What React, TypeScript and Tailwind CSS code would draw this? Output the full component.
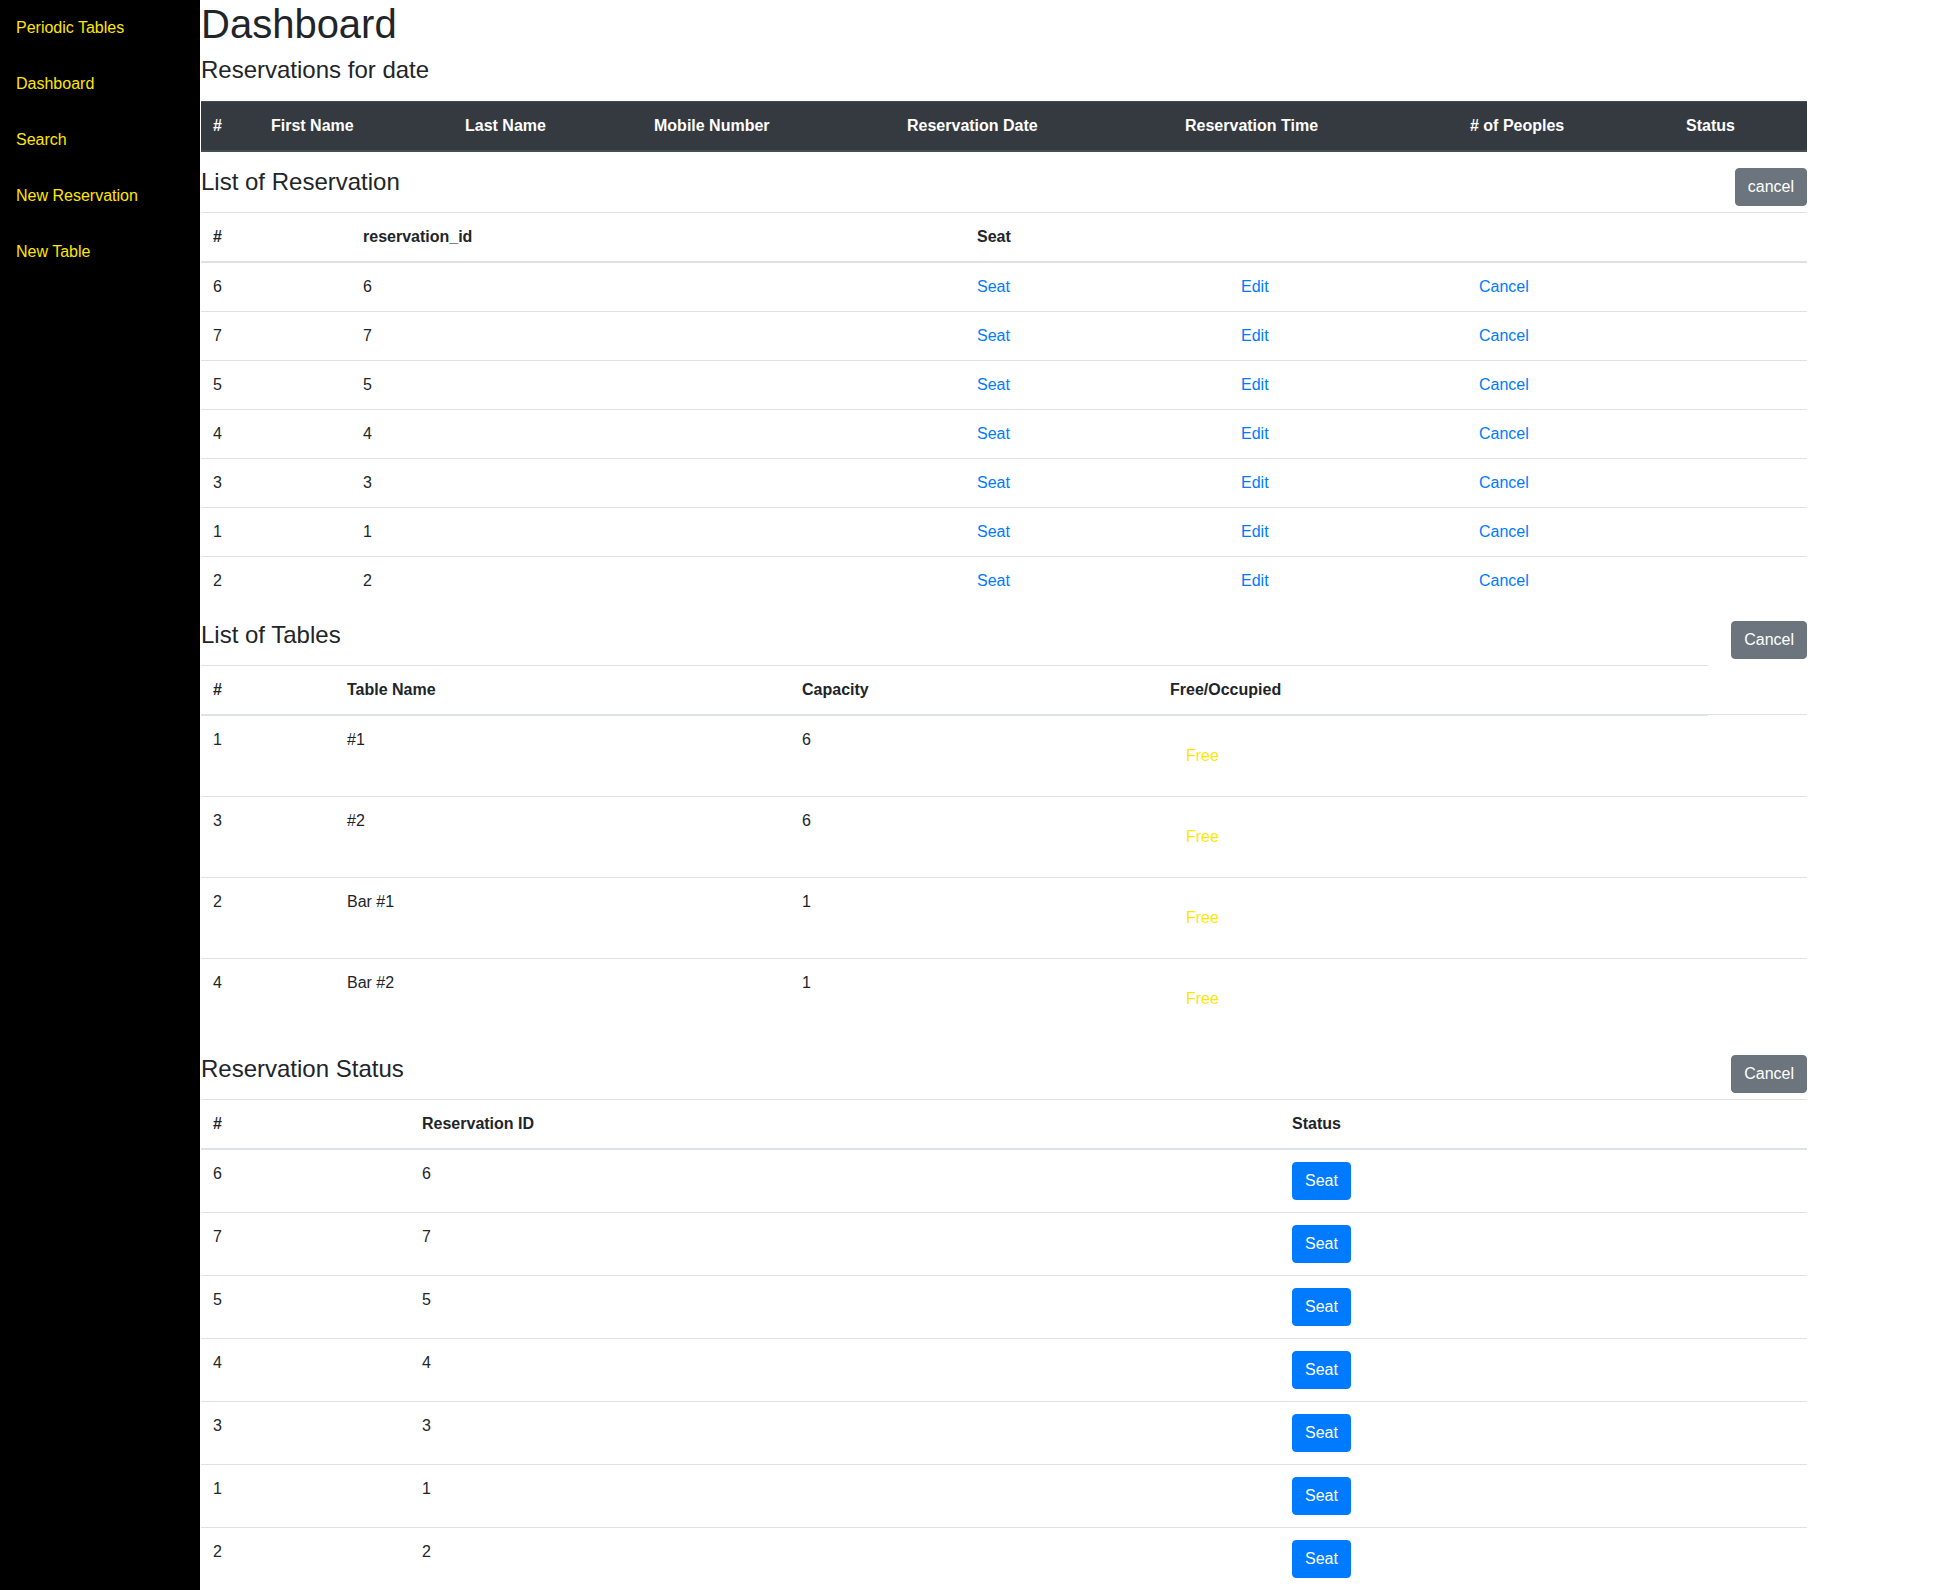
import React from 'react';

const navItems = ['Periodic Tables', 'Dashboard', 'Search', 'New Reservation', 'New Table'];

const reservations = [6, 7, 5, 4, 3, 1, 2];

const tables = [
  { id: 1, name: '#1', capacity: 6 },
  { id: 3, name: '#2', capacity: 6 },
  { id: 2, name: 'Bar #1', capacity: 1 },
  { id: 4, name: 'Bar #2', capacity: 1 },
];

const th = 'border-t border-b-2 border-[#dee2e6] p-3 text-left font-bold align-bottom';
const td = 'border-t border-[#dee2e6] p-3 align-top';

const SectionHeader: React.FC<{ title: string; button: string }> = ({ title, button }) => (
  <div className="flex items-start justify-between mb-[6px]">
    <h4 className="text-[24px] leading-[1.2] font-medium">{title}</h4>
    <button className="bg-[#6c757d] border border-[#6c757d] text-white rounded px-3 py-1.5 text-base leading-6">
      {button}
    </button>
  </div>
);

const App: React.FC = () => {
  return (
    <div className="flex min-h-screen bg-white text-[#212529] font-['Liberation_Sans',Arial,sans-serif] text-base leading-6">
      {/* Sidebar */}
      <nav className="w-[200px] shrink-0 bg-black">
        {navItems.map((item) => (
          <a key={item} href="#" className="block px-4 py-4 text-[#ffe600] no-underline">
            {item}
          </a>
        ))}
      </nav>

      {/* Main content */}
      <main className="w-[1606px] ml-px">
        <h1 className="text-[40px] leading-[1.2] font-medium mb-2">Dashboard</h1>
        <h4 className="text-[24px] leading-[1.2] font-medium mb-4">Reservations for date</h4>

        <table className="w-full table-fixed border-collapse mb-4">
          <colgroup>
            <col className="w-[58px]" />
            <col className="w-[194px]" />
            <col className="w-[189px]" />
            <col className="w-[253px]" />
            <col className="w-[278px]" />
            <col className="w-[285px]" />
            <col className="w-[216px]" />
            <col className="w-[133px]" />
          </colgroup>
          <thead>
            <tr>
              {['#', 'First Name', 'Last Name', 'Mobile Number', 'Reservation Date', 'Reservation Time', '# of Peoples', 'Status'].map((h) => (
                <th key={h} className="bg-[#343a40] text-white border-t border-b-2 border-[#454d55] p-3 text-left font-bold align-bottom">
                  {h}
                </th>
              ))}
            </tr>
          </thead>
        </table>

        {/* List of Reservation */}
        <SectionHeader title="List of Reservation" button="cancel" />
        <table className="w-full table-fixed border-collapse mb-4">
          <colgroup>
            <col className="w-[150px]" />
            <col className="w-[614px]" />
            <col className="w-[264px]" />
            <col className="w-[238px]" />
            <col className="w-[340px]" />
          </colgroup>
          <thead>
            <tr>
              <th className={th}>#</th>
              <th className={th}>reservation_id</th>
              <th className={th}>Seat</th>
              <th className={th} colSpan={2}></th>
            </tr>
          </thead>
          <tbody>
            {reservations.map((r) => (
              <tr key={r}>
                <td className={td}>{r}</td>
                <td className={td}>{r}</td>
                <td className={td}><a href="#" className="text-[#007bff]">Seat</a></td>
                <td className={td}><a href="#" className="text-[#007bff]">Edit</a></td>
                <td className={td}><a href="#" className="text-[#007bff]">Cancel</a></td>
              </tr>
            ))}
          </tbody>
        </table>

        {/* List of Tables */}
        <SectionHeader title="List of Tables" button="Cancel" />
        <table className="w-full table-fixed border-collapse mb-4">
          <colgroup>
            <col className="w-[134px]" />
            <col className="w-[455px]" />
            <col className="w-[368px]" />
            <col className="w-[550px]" />
            <col className="w-[99px]" />
          </colgroup>
          <thead>
            <tr>
              <th className={th}>#</th>
              <th className={th}>Table Name</th>
              <th className={th}>Capacity</th>
              <th className={th}>Free/Occupied</th>
            </tr>
          </thead>
          <tbody>
            {tables.map((t) => (
              <tr key={t.id}>
                <td className={td}>{t.id}</td>
                <td className={td}>{t.name}</td>
                <td className={td}>{t.capacity}</td>
                <td className={td}>
                  <div className="h-[56px] pt-[16px] pl-4 text-[#ffe600]">Free</div>
                </td>
                <td className={td}></td>
              </tr>
            ))}
          </tbody>
        </table>

        {/* Reservation Status */}
        <SectionHeader title="Reservation Status" button="Cancel" />
        <table className="w-full table-fixed border-collapse">
          <colgroup>
            <col className="w-[209px]" />
            <col className="w-[870px]" />
            <col className="w-[527px]" />
          </colgroup>
          <thead>
            <tr>
              <th className={th}>#</th>
              <th className={th}>Reservation ID</th>
              <th className={th}>Status</th>
            </tr>
          </thead>
          <tbody>
            {reservations.map((r) => (
              <tr key={r}>
                <td className={td}>{r}</td>
                <td className={td}>{r}</td>
                <td className={td}>
                  <button className="bg-[#007bff] border border-[#007bff] text-white rounded px-3 py-1.5 text-base leading-6">
                    Seat
                  </button>
                </td>
              </tr>
            ))}
          </tbody>
        </table>
      </main>
    </div>
  );
};

export default App;
